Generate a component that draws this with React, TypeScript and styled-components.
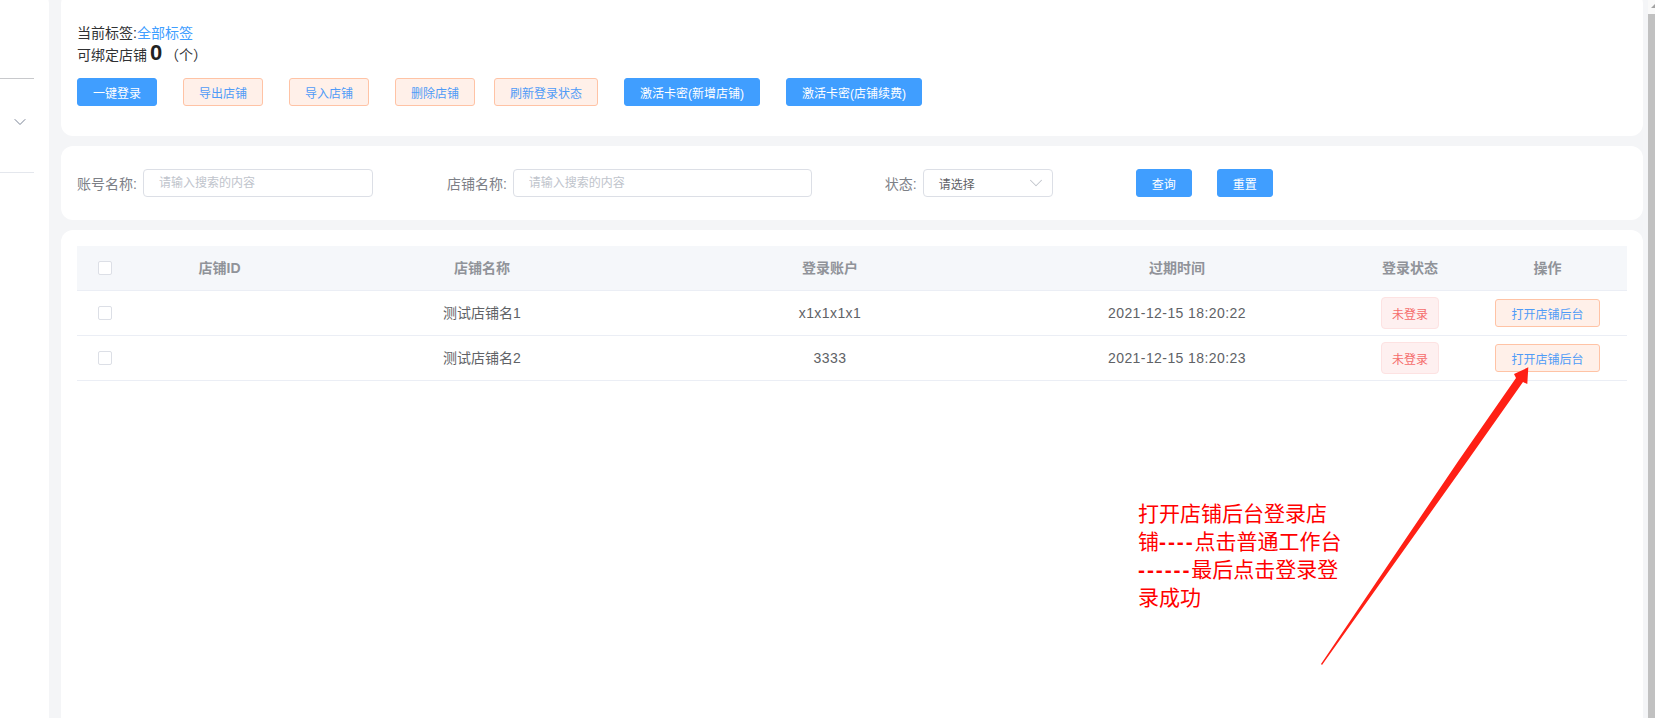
import React from "react";
import styled, { createGlobalStyle } from "styled-components";
import { ChevronDown } from "lucide-react";

const rows = [
  { name: "测试店铺名1", account: "x1x1x1x1", expires: "2021-12-15 18:20:22" },
  { name: "测试店铺名2", account: "3333", expires: "2021-12-15 18:20:23" },
];

export default function App() {
  return (
    <Page>
      <GlobalStyle />
      <Sidebar>
        <SideDivider />
        <SideMenu>
          <ChevronDown size={20} strokeWidth={1.2} />
        </SideMenu>
        <SideDivider $light />
      </Sidebar>

      <Main>
        <TopCard>
          <Summary>
            <div>
              当前标签:<TagLink>全部标签</TagLink>
            </div>
            <div>
              可绑定店铺 <Count>0</Count> （个）
            </div>
          </Summary>
          <Toolbar>
            <Button>一键登录</Button>
            <Button $light>导出店铺</Button>
            <Button $light>导入店铺</Button>
            <Button $light>删除店铺</Button>
            <Button $light $pull>
              刷新登录状态
            </Button>
            <Button>激活卡密(新增店铺)</Button>
            <Button>激活卡密(店铺续费)</Button>
          </Toolbar>
        </TopCard>

        <FilterCard>
          <FilterGroup>
            <FilterLabel>账号名称:</FilterLabel>
            <SearchInput $width={230} placeholder="请输入搜索的内容" />
          </FilterGroup>
          <FilterGroup $left={74}>
            <FilterLabel>店铺名称:</FilterLabel>
            <SearchInput $width={299} placeholder="请输入搜索的内容" />
          </FilterGroup>
          <FilterGroup $left={73}>
            <FilterLabel>状态:</FilterLabel>
            <SelectBox>
              请选择
              <ChevronDown size={22} strokeWidth={1.1} color="#c0c4cc" />
            </SelectBox>
          </FilterGroup>
          <FilterActions>
            <Button>查询</Button>
            <Button>重置</Button>
          </FilterActions>
        </FilterCard>

        <TableCard>
          <ShopTable>
            <colgroup>
              <col width={56} />
              <col width={173} />
              <col width={352} />
              <col width={344} />
              <col width={350} />
              <col width={116} />
              <col width={159} />
            </colgroup>
            <thead>
              <tr>
                <HeadCell>
                  <Check type="checkbox" />
                </HeadCell>
                <HeadCell $lift>店铺ID</HeadCell>
                <HeadCell $lift>店铺名称</HeadCell>
                <HeadCell $lift>登录账户</HeadCell>
                <HeadCell $lift>过期时间</HeadCell>
                <HeadCell $lift>登录状态</HeadCell>
                <HeadCell $lift>操作</HeadCell>
              </tr>
            </thead>
            <tbody>
              {rows.map((row) => (
                <tr key={row.name}>
                  <Cell>
                    <Check type="checkbox" />
                  </Cell>
                  <Cell />
                  <Cell $lift>{row.name}</Cell>
                  <Cell $spaced>{row.account}</Cell>
                  <Cell $spaced>{row.expires}</Cell>
                  <Cell>
                    <StatusTag>未登录</StatusTag>
                  </Cell>
                  <Cell>
                    <Button $light>打开店铺后台</Button>
                  </Cell>
                </tr>
              ))}
            </tbody>
          </ShopTable>
        </TableCard>
      </Main>

      <Scrollbar>
        <ScrollArrow />
        <ScrollThumb />
      </Scrollbar>

      <Note>
        打开店铺后台登录店
        <br />
        铺<Dashes>----</Dashes>点击普通工作台
        <br />
        <Dashes>------</Dashes>最后点击登录登
        <br />
        录成功
      </Note>
      <Arrow viewBox="1310 360 225 310">
        <polygon
          points="1321,664 1459,460 1516,378 1514,374 1528.3,367.3 1527.3,384 1523,382 1468,460 1322,665"
          fill="#ff2015"
        />
      </Arrow>
    </Page>
  );
}

const GlobalStyle = createGlobalStyle`
  html, body {
    margin: 0;
    height: 100%;
    overflow: hidden;
    background: #f4f5f7;
  }
  * {
    box-sizing: border-box;
  }
`;

const Page = styled.div`
  position: relative;
  display: flex;
  height: 718px;
  overflow: hidden;
  background: #f4f5f7;
  font-family: "Liberation Sans", "Noto Sans CJK SC", sans-serif;
  font-size: 14px;
  color: #606266;
`;

const Sidebar = styled.aside`
  width: 49px;
  flex: none;
  margin-top: -8px;
  padding-top: 86px;
  background: #fff;
  border-top-right-radius: 12px;
`;

const SideDivider = styled.div<{ $light?: boolean }>`
  width: 34px;
  height: 1px;
  background: ${(p) => (p.$light ? "#e4e7ed" : "#c8c9cc")};
`;

const SideMenu = styled.div`
  width: 34px;
  height: 93px;
  padding: 33px 0 0 10px;
  color: #7a8496;
`;

const Main = styled.main`
  flex: 1;
  min-width: 0;
  margin-top: -8px;
  padding: 0 5px 0 12px;
  display: flex;
  flex-direction: column;
  gap: 10px;
`;

const Card = styled.section`
  background: #fff;
  border-radius: 12px;
`;

const TopCard = styled(Card)`
  flex: none;
  height: 144px;
  padding: 32px 16px 0;
`;

const Summary = styled.div`
  height: 54px;
  line-height: 19px;
  color: #303133;
`;

const TagLink = styled.span`
  color: #409eff;
`;

const Count = styled.b`
  margin: 0 -1px;
  font-size: 22px;
  color: #222;
`;

const Toolbar = styled.div`
  display: flex;
  gap: 26px;
`;

const Button = styled.button<{ $light?: boolean; $pull?: boolean }>`
  height: 28px;
  padding: 0 15px;
  margin-left: ${(p) => (p.$pull ? "-7px" : "0")};
  border: 1px solid ${(p) => (p.$light ? "#ffc3a5" : "#409eff")};
  border-radius: 3px;
  background: ${(p) => (p.$light ? "#fff0e9" : "#409eff")};
  color: ${(p) => (p.$light ? "#4f9bf7" : "#fff")};
  font-family: inherit;
  font-size: 12px;
  white-space: nowrap;
`;

const FilterCard = styled(Card)`
  flex: none;
  height: 74px;
  padding: 0 16px;
  display: flex;
  align-items: center;
`;

const FilterGroup = styled.label<{ $left?: number }>`
  display: flex;
  align-items: center;
  gap: 6px;
  margin-left: ${(p) => p.$left ?? 0}px;
`;

const FilterLabel = styled.span`
  color: #7d8087;
  white-space: nowrap;
`;

const SearchInput = styled.input<{ $width: number }>`
  width: ${(p) => p.$width}px;
  height: 28px;
  padding: 0 15px;
  border: 1px solid #dcdfe6;
  border-radius: 4px;
  outline: none;
  font-family: inherit;
  font-size: 12px;

  &::placeholder {
    color: #c0c4cc;
  }
`;

const SelectBox = styled.div`
  width: 130px;
  height: 28px;
  padding: 0 5px 0 15px;
  display: flex;
  align-items: center;
  justify-content: space-between;
  border: 1px solid #dcdfe6;
  border-radius: 4px;
  font-size: 12px;
`;

const FilterActions = styled.div`
  margin-left: 83px;
  display: flex;
  gap: 25px;
`;

const TableCard = styled(Card)`
  flex: none;
  height: 560px;
  padding: 16px;
`;

const ShopTable = styled.table`
  width: 100%;
  table-layout: fixed;
  border-collapse: separate;
  border-spacing: 0;
`;

const HeadCell = styled.th<{ $lift?: boolean }>`
  height: 45px;
  padding: 0 0 ${(p) => (p.$lift ? "2px" : "0")};
  background: #f5f7fa;
  border-bottom: 1px solid #ebeef5;
  color: #909399;
  font-size: 14px;
  font-weight: 700;
  text-align: center;
  vertical-align: middle;
`;

const Cell = styled.td<{ $spaced?: boolean; $lift?: boolean }>`
  height: 45px;
  padding: 0 0 ${(p) => (p.$lift ? "2px" : "0")};
  border-bottom: 1px solid #ebeef5;
  text-align: center;
  vertical-align: middle;
  letter-spacing: ${(p) => (p.$spaced ? "0.42px" : "0")};
`;

const Check = styled.input`
  appearance: none;
  display: block;
  width: 14px;
  height: 14px;
  margin: 0 auto;
  background: #fff;
  border: 1px solid #dcdfe6;
  border-radius: 2px;
`;

const StatusTag = styled.span`
  display: inline-flex;
  align-items: center;
  justify-content: center;
  width: 58px;
  height: 32px;
  vertical-align: middle;
  background: #fef0f0;
  border: 1px solid #fde2e2;
  border-radius: 4px;
  color: #f56c6c;
  font-size: 12px;
`;

const Scrollbar = styled.div`
  width: 7px;
  flex: none;
  display: flex;
  flex-direction: column;
  background: #f9f9f9;
`;

const ScrollArrow = styled.div`
  align-self: flex-end;
  margin-top: 4px;
  border-left: 4px solid transparent;
  border-bottom: 4px solid #a3a3a3;
`;

const ScrollThumb = styled.div`
  flex: 1;
  margin-top: 6px;
  background: #c1c1c1;
`;

const Note = styled.div`
  position: absolute;
  left: 1138px;
  top: 500px;
  color: #ff0000;
  font-size: 21px;
  line-height: 28px;
  white-space: nowrap;
`;

const Dashes = styled.span`
  font-weight: 700;
  letter-spacing: 1.9px;
`;

const Arrow = styled.svg`
  position: absolute;
  left: 1310px;
  top: 360px;
  width: 225px;
  height: 310px;
`;
